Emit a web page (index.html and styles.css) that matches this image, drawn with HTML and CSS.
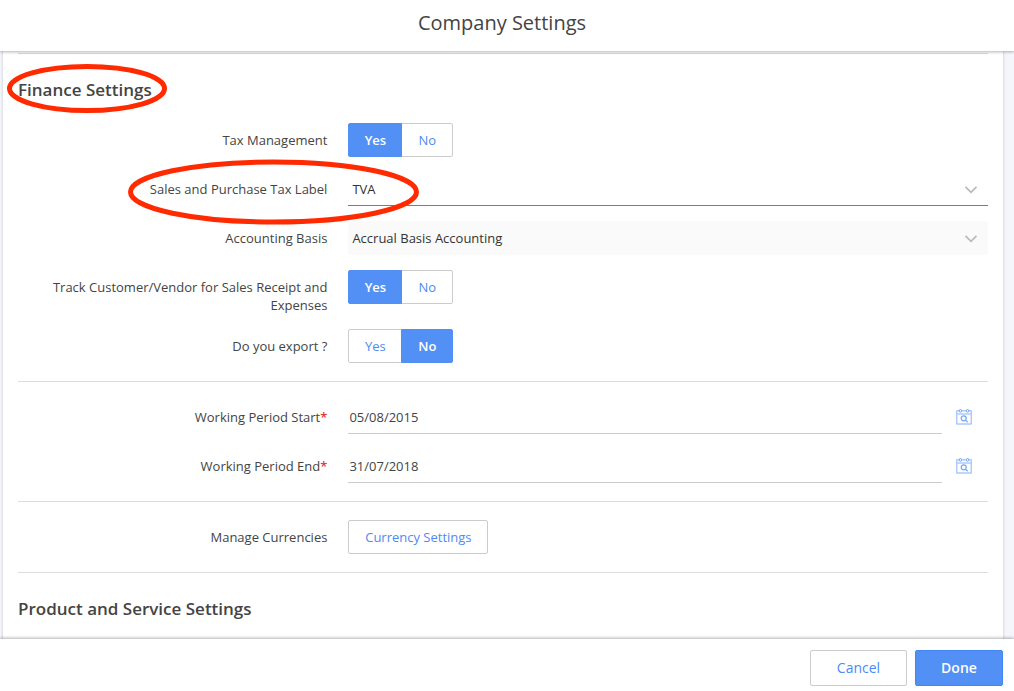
FILE: index.html
```html
<!DOCTYPE html>
<html lang="en">
<head>
<meta charset="utf-8">
<meta name="viewport" content="width=device-width, initial-scale=1">
<title>Company Settings</title>
<link rel="stylesheet" href="styles.css">
</head>
<body>
<svg class="symbols" aria-hidden="true">
  <symbol id="chevron" viewBox="0 0 14 8"><path d="M1.500 .8L7 6.300L12.500 .8" fill="none" stroke="#b9b9b9" stroke-width="1.700"/></symbol>
  <symbol id="calendar" viewBox="0 0 16 16">
    <g fill="none">
      <rect x=".7" y="1.700" width="14.600" height="13.300" rx=".5" stroke="#a9c8fb" stroke-width="1.400"/>
      <path d="M1 5H15" stroke="#a9c8fb" stroke-width="1.400"/>
      <rect x="3.300" y=".5" width="2.200" height="2.700" rx="1" fill="#fff" stroke="#6ba0f4"/>
      <rect x="10.500" y=".5" width="2.200" height="2.700" rx="1" fill="#fff" stroke="#6ba0f4"/>
      <circle cx="7.700" cy="9.300" r="2.500" stroke="#76a7f6" stroke-width="1.200"/>
      <path d="M9.500 11.100L11.700 13.200" stroke="#76a7f6" stroke-width="1.200"/>
    </g>
  </symbol>
</svg>
<header class="header"><h1 class="title">Company Settings</h1></header>
<main class="body">
  <form class="panel" id="settings">
    <section class="section">
      <h2 class="heading">Finance Settings</h2>
      <div class="rows">
        <div class="row">
          <span class="label" id="tax">Tax Management</span>
          <div class="toggle" role="group" aria-labelledby="tax"><button type="button" class="option yes selected">Yes</button><button type="button" class="option no">No</button></div>
        </div>
        <div class="row">
          <label class="label" for="tax-label">Sales and Purchase Tax Label</label>
          <div class="select-box"><select class="select active" id="tax-label"><option>TVA</option></select><svg class="chevron"><use href="#chevron"/></svg></div>
        </div>
        <div class="row">
          <label class="label" for="basis">Accounting Basis</label>
          <div class="select-box"><select class="select muted" id="basis"><option>Accrual Basis Accounting</option></select><svg class="chevron"><use href="#chevron"/></svg></div>
        </div>
        <div class="row">
          <span class="label" id="track">Track Customer/Vendor for Sales Receipt and Expenses</span>
          <div class="toggle" role="group" aria-labelledby="track"><button type="button" class="option yes selected">Yes</button><button type="button" class="option no">No</button></div>
        </div>
        <div class="row">
          <span class="label" id="export">Do you export ?</span>
          <div class="toggle" role="group" aria-labelledby="export"><button type="button" class="option yes">Yes</button><button type="button" class="option no selected">No</button></div>
        </div>
      </div>
    </section>
    <section class="section">
      <div class="rows">
        <div class="row">
          <label class="label" for="start">Working Period Start<span class="required">*</span></label>
          <div class="date"><input class="input" id="start" type="text" value="05/08/2015"><button type="button" class="pick" aria-label="Choose start date"><svg class="calendar"><use href="#calendar"/></svg></button></div>
        </div>
        <div class="row">
          <label class="label" for="end">Working Period End<span class="required">*</span></label>
          <div class="date"><input class="input" id="end" type="text" value="31/07/2018"><button type="button" class="pick" aria-label="Choose end date"><svg class="calendar"><use href="#calendar"/></svg></button></div>
        </div>
      </div>
    </section>
    <section class="section">
      <div class="rows">
        <div class="row">
          <span class="label">Manage Currencies</span>
          <div><button type="button" class="outline">Currency Settings</button></div>
        </div>
      </div>
    </section>
    <section class="section">
      <h2 class="heading">Product and Service Settings</h2>
    </section>
    <svg class="marks" viewBox="0 0 430 180" aria-hidden="true">
      <g fill="none" stroke="#ff2a00" stroke-width="5">
        <ellipse cx="84" cy="37.500" rx="77.500" ry="22"/>
        <ellipse cx="270.500" cy="141" rx="143" ry="30"/>
      </g>
    </svg>
  </form>
</main>
<footer class="footer">
  <button type="button" class="action cancel">Cancel</button>
  <button type="submit" form="settings" class="action done">Done</button>
</footer>
</body>
</html>
```
FILE: styles.css
```css
* { box-sizing: border-box; }

body {
  display: flex;
  flex-direction: column;
  height: 100vh;
  margin: 0;
  overflow: hidden;
  background: #f5f6fb;
  color: #444;
  font: 13px/18px "Open Sans", "Noto Sans", sans-serif;
}

button, input, select { font: inherit; }
button { cursor: pointer; }
.symbols { position: absolute; width: 0; height: 0; }

.header {
  z-index: 1;
  flex: none;
  padding: 9px 10px 14px 0;
  background: #fff;
  box-shadow: 0 1px 3px rgba(0, 0, 0, .3);
  text-align: center;
}

.title {
  margin: 0;
  font-size: 20px;
  line-height: 28px;
  font-weight: 400;
}

.body {
  flex: 1;
  min-height: 0;
  padding: 0 11px 0 3px;
  overflow: hidden;
}

.panel {
  position: relative;
  padding: 2px 15px 40px;
  background: #fff;
  box-shadow: 0 0 3px rgba(0, 0, 0, .2);
}

.section {
  padding-bottom: 18px;
  border-top: 1px solid #ddd;
}

.heading {
  margin: 0;
  padding: 24px 0 3px;
  font-size: 17px;
  line-height: 24px;
  font-weight: 600;
}

.rows {
  display: flex;
  flex-direction: column;
  gap: 15px;
  padding-top: 18px;
}

.row {
  display: grid;
  grid-template-columns: 32% 1fr;
  column-gap: 20px;
  align-items: start;
}

.label {
  padding: 8px 1px 0 0;
  text-align: right;
}

.required { color: #e03c3c; font-weight: 600; }
.toggle { display: flex; }

.option, .outline {
  height: 34px;
  padding: 0 15px;
  border: 1px solid #ccc;
  background: #fff;
  color: #4d8af5;
}

.option.yes { width: 54px; border-radius: 2px 0 0 2px; }
.option.no { width: 52px; margin-left: -1px; border-radius: 0 2px 2px 0; }

.option.selected {
  z-index: 1;
  border-color: #5290f5;
  background: #5290f5;
  color: #fff;
  font-weight: 600;
}

.outline { min-width: 140px; border-radius: 2px; }
.select-box { position: relative; }

.select {
  display: block;
  width: 100%;
  height: 34px;
  padding: 0 32px 0 4px;
  border: 0;
  border-bottom: 1px solid transparent;
  border-radius: 0;
  appearance: none;
  background: #fff;
  color: #333;
}

.select.active { border-color: #4583e5; }
.select.muted { border-color: #fafafa; background: #fafafa; }

.chevron {
  position: absolute;
  top: 14px;
  right: 10px;
  width: 14px;
  height: 8px;
  pointer-events: none;
}

.date { display: flex; }

.input {
  flex: 1;
  min-width: 0;
  height: 34px;
  padding: 0 1px;
  border: 0;
  border-bottom: 1px solid #ccc;
  background: #fff;
  color: #444;
}

.pick {
  width: 46px;
  height: 34px;
  padding: 0 16px 0 14px;
  border: 0;
  background: none;
}

.calendar { display: block; width: 16px; height: 16px; }

.marks {
  position: absolute;
  top: 0;
  left: 0;
  width: 430px;
  height: 180px;
  pointer-events: none;
}

.footer {
  z-index: 1;
  display: flex;
  flex: none;
  justify-content: flex-end;
  gap: 8px;
  padding: 11px 11px 5px;
  background: #fff;
  box-shadow: 0 -1px 3px rgba(0, 0, 0, .3);
}

.action {
  height: 36px;
  border: 1px solid #ccc;
  border-radius: 2px;
  font-size: 14px;
}

.cancel { width: 97px; background: #fff; color: #4d8af5; }
.done { width: 88px; border-color: #4285f4; background: #5290f5; color: #fff; font-weight: 600; }
```
